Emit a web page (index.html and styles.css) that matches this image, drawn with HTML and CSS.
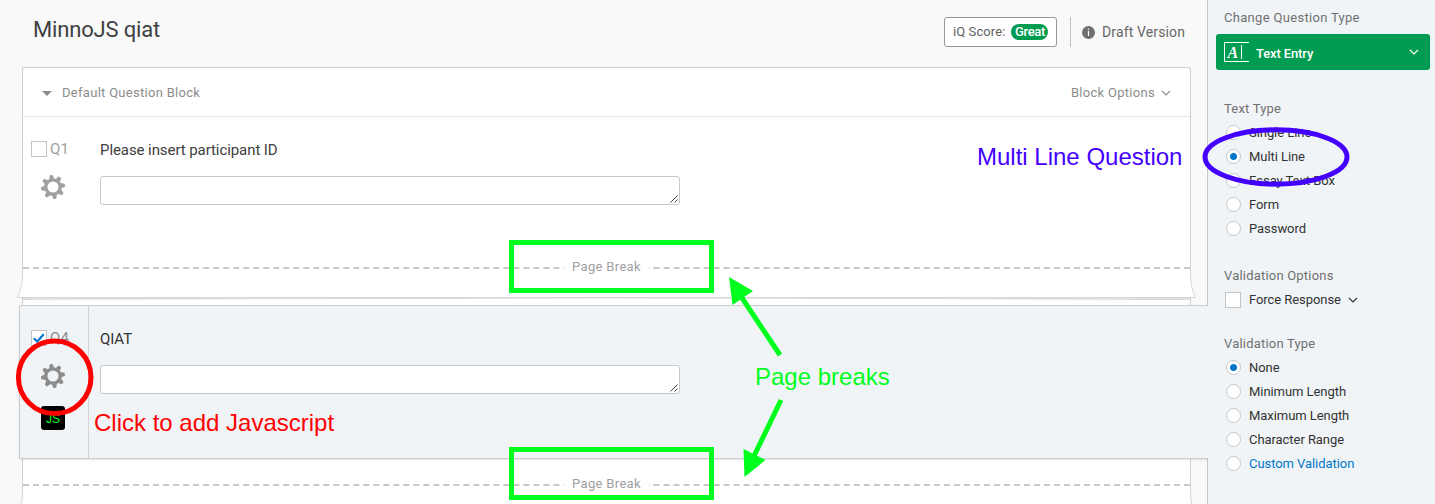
FILE: index.html
```html
<!DOCTYPE html>
<html lang="en">
<head>
<meta charset="utf-8">
<title>MinnoJS qiat</title>
<link rel="stylesheet" href="styles.css">
</head>
<body>
<svg class="defs" aria-hidden="true">
  <symbol id="gear" viewBox="-12 -12 24 24">
    <circle r="7.200" fill="none" stroke="currentColor" stroke-width="3.300"/>
    <g fill="currentColor" transform="rotate(-9)">
      <path id="tooth" d="M-2.500-8L-1.700-11.400Q-1.500-12 -.8-12H.8Q1.500-12 1.700-11.400L2.500-8Z"/>
      <use href="#tooth" transform="rotate(45)"/><use href="#tooth" transform="rotate(90)"/>
      <use href="#tooth" transform="rotate(135)"/><use href="#tooth" transform="rotate(180)"/>
      <use href="#tooth" transform="rotate(225)"/><use href="#tooth" transform="rotate(270)"/>
      <use href="#tooth" transform="rotate(315)"/>
    </g>
  </symbol>
  <symbol id="chevron" viewBox="0 0 10 6"><path d="M1 1l4 4 4-4" fill="none" stroke="currentColor" stroke-width="1.1"/></symbol>
  <symbol id="grip" viewBox="0 0 8 8"><path d="M.5 7.5l7-7M4.5 7.5l3-3" stroke="#444" stroke-width="1" fill="none"/></symbol>
  <symbol id="curl" viewBox="0 0 1181 23">
    <path d="M6.500 0C6.500 9 4 18 1.500 22.500H1179.500C1177 18 1174.500 9 1174.500 0Z" fill="#fff"/>
    <path d="M6.500 0C6.500 9 4 18 1.500 22.500H1179.500C1177 18 1174.500 9 1174.500 0" fill="none" stroke="#d6d6d6"/>
  </symbol>
</svg>

<div class="app">
  <main class="editor">
    <header class="topbar">
      <h1>MinnoJS qiat</h1>
      <div class="score">iQ Score: <span class="pill">Great</span></div>
      <div class="draft">
        <svg width="13" height="13" viewBox="0 0 13 13"><circle cx="6.500" cy="6.500" r="6.500" fill="#707070"/><path d="M6.500 5v5M6.500 2.800v1.300" stroke="#fff" stroke-width="1.200" fill="none"/></svg>
        <span>Draft Version</span>
      </div>
    </header>

    <section class="sheet first">
      <div class="block-head">
        <svg width="10" height="5" viewBox="0 0 10 5"><path d="M0 0h10L5 5z" fill="#8c8c8c"/></svg>
        <span class="block-name">Default Question Block</span>
        <span class="block-options">Block Options</span>
        <svg class="chev" width="10" height="6"><use href="#chevron"/></svg>
      </div>
      <div class="question">
        <div class="gutter">
          <div class="pick"><i class="check"></i><span>Q1</span></div>
          <svg class="gear" width="24" height="24"><use href="#gear"/></svg>
        </div>
        <div class="body">
          <p>Please insert participant ID</p>
          <div class="field"><svg width="8" height="8"><use href="#grip"/></svg></div>
        </div>
      </div>
      <div class="break"><span>Page Break</span></div>
    </section>
    <div class="curl-row"><svg width="1181" height="23"><use href="#curl"/></svg></div>

    <section class="sheet second">
      <svg class="curl-shadow" width="1167" height="7" viewBox="0 0 1167 7"><path d="M0 0H1167V2Q900 1 584 .5Q268 1 0 2Z" fill="#dedede"/></svg>
      <div class="question selected">
        <div class="gutter">
          <div class="pick"><i class="check"><svg width="14" height="14" viewBox="0 0 14 14"><path d="M1.800 7.300l3.400 3.300 6.500-7.400" fill="none" stroke="#0077c8" stroke-width="2.200"/></svg></i><span>Q4</span></div>
          <svg class="gear" width="24" height="24"><use href="#gear"/></svg>
          <div class="js">JS</div>
        </div>
        <div class="body">
          <p>QIAT</p>
          <div class="field"><svg width="8" height="8"><use href="#grip"/></svg></div>
        </div>
      </div>
      <div class="break"><span>Page Break</span></div>
    </section>
    <div class="curl-row"><svg width="1181" height="23"><use href="#curl"/></svg></div>
  </main>

  <aside class="panel">
    <h2 class="wide">Change Question Type</h2>
    <div class="type-button">
      <svg width="25" height="20" viewBox="0 0 25 20"><path d="M25 .5H.5v19H25M17.500 3v14" fill="none" stroke="#fff"/><text class="type-letter" x="3.500" y="15.500">A</text></svg>
      <span>Text Entry</span>
      <svg width="10" height="6"><use href="#chevron"/></svg>
    </div>
    <h2 class="text-type">Text Type</h2>
    <ul>
      <li><i class="radio"></i>Single Line</li>
      <li><i class="radio on"></i>Multi Line</li>
      <li><i class="radio"></i>Essay Text Box</li>
      <li><i class="radio"></i>Form</li>
      <li><i class="radio"></i>Password</li>
    </ul>
    <h2 class="options">Validation Options</h2>
    <ul>
      <li><i class="check"></i>Force Response <svg width="10" height="6"><use href="#chevron"/></svg></li>
    </ul>
    <h2 class="validation">Validation Type</h2>
    <ul>
      <li><i class="radio on"></i>None</li>
      <li><i class="radio"></i>Minimum Length</li>
      <li><i class="radio"></i>Maximum Length</li>
      <li><i class="radio"></i>Character Range</li>
      <li class="link"><i class="radio"></i>Custom Validation</li>
    </ul>
  </aside>
</div>

<svg class="notes" width="1435" height="504" viewBox="0 0 1435 504">
  <g fill="none" stroke-width="5">
    <ellipse cx="1276" cy="157" rx="71" ry="27.200" stroke="#4400ff"/>
    <circle cx="54.700" cy="377.300" r="36.300" stroke="#f00"/>
    <g stroke="#00ff1e">
      <path d="M511.500 242.500h200v48h-200zM511.500 449.500h200v48h-200z"/>
      <path d="M780 355L740 295M781 400L754 456"/>
    </g>
  </g>
  <path d="M729 277l24 14-20.500 14zM744.500 477l-1-28 22 11z" fill="#00ff1e"/>
  <text x="977" y="165" fill="#4400ff">Multi Line Question</text>
  <text x="755" y="385" fill="#00ff1e">Page breaks</text>
  <text x="94" y="431" fill="#f00">Click to add Javascript</text>
</svg>
</body>
</html>
```
FILE: styles.css
```css
* { box-sizing: border-box; }
body { margin: 0; height: 504px; overflow: hidden; position: relative; font: 400 13px/24px Roboto, sans-serif; color: #333; }
h1, h2, p, ul { margin: 0; padding: 0; }
ul { list-style: none; }
svg { display: block; flex: none; }
.defs { position: absolute; width: 0; height: 0; }
.app { display: flex; height: 504px; overflow: hidden; }

.editor { width: 1207px; flex: none; background: #f9f9f9; }
.topbar { height: 67px; display: flex; align-items: flex-start; padding: 17px 22px 0 33px; }
h1 { flex: 1; font-size: 22px; font-weight: 400; line-height: 25px; letter-spacing: -.17px; color: #404041; }
.score { display: flex; align-items: center; height: 30px; width: 113px; padding-left: 8px; border: 1px solid #979797; border-radius: 3px; background: #fff; color: #606060; white-space: nowrap; letter-spacing: .1px; }
.pill { margin-left: 6px; width: 37px; height: 16px; line-height: 16px; border-radius: 8px; background: #009c51; color: #fff; font-weight: 500; text-align: center; letter-spacing: -.35px; }
.draft { display: flex; align-items: center; gap: 7px; height: 30px; margin-left: 13px; padding-left: 11px; border-left: 1px solid #c4c4c4; color: #686868; font-size: 14px; letter-spacing: .13px; }

.sheet { margin: 0 16px 0 22px; background: #fff; border: solid #cfcfcf; border-width: 0 1px; }
.first { height: 208px; border-top-width: 1px; border-radius: 3px 3px 0 0; }
.second { height: 194px; }
.block-head { height: 49px; display: flex; align-items: center; padding: 2px 19px 0 19px; border-bottom: 1px solid #e6e6e6; color: #8c8c8c; letter-spacing: .29px; }
.block-name { flex: 1; margin-left: 10px; }
.chev { margin-left: 6px; }

.question { display: flex; height: 150px; }
.gutter { width: 66px; padding: 24px 0 0 8px; border-right: 1px solid transparent; color: #a0a0a0; }
.pick { display: flex; align-items: center; gap: 3px; height: 16px; font-size: 15px; letter-spacing: .3px; }
.check { width: 16px; height: 16px; border: 1px solid #c4c4c4; background: #fff; flex: none; }
.gear { margin: 18px 0 0 10px; }
.body { padding: 21px 0 0 11px; }
.body p { font-size: 15px; letter-spacing: -.08px; color: #404041; }
.field { margin-top: 14px; width: 580px; height: 29px; border: 1px solid #c8c8c8; border-radius: 3px; background: #fff; display: flex; align-items: flex-end; justify-content: flex-end; padding: 1px; }

.selected { position: relative; z-index: 1; width: 1189px; height: 154px; margin-left: -4px; background: #f0f4f7; border: 1px solid #c9cdd0; border-right: 0; border-radius: 2px 0 0 2px; box-shadow: 0 1px 2px rgba(0, 0, 0, .1); clip-path: inset(0 0 -3px -3px); }
.selected .gutter { width: 69px; padding-left: 11px; border-right-color: #d2d4d6; color: #8c8c8c; }
.js { width: 24px; height: 24px; margin: 18px 0 0 10px; border-radius: 3px; background: #000; color: #00ff1e; font: 12px/26px "Liberation Sans", Arial, sans-serif; text-align: center; }
.selected p { color: #333; }

.break { position: relative; height: 8px; border-top: 2px dashed #c8c8c8; }
.second .break { margin-top: 25px; }
.break span { position: absolute; left: 541px; top: -14px; width: 85px; background: #fff; text-align: center; color: #a0a0a0; letter-spacing: .33px; }
.curl-row { height: 23px; margin-left: 16px; }

.panel { flex: 1; padding: 6px 5px 0 8px; border-left: 1px solid #c4c8cb; background: #f0f4f7; letter-spacing: -.06px; }
h2 { padding-left: 8px; font-size: 13px; font-weight: 400; line-height: 24px; letter-spacing: .2px; color: #707070; }
.wide { letter-spacing: .31px; }
.type-button { display: flex; align-items: center; height: 36px; margin-top: 4px; padding: 0 11px 0 8px; border-radius: 3px; background: #009c51; color: #fff; }
.type-button span { flex: 1; margin-left: 7px; padding-top: 3px; font-weight: 500; letter-spacing: -.12px; }
.type-letter { font: italic bold 16px "Liberation Serif", serif; fill: #fff; }
.text-type { margin-top: 27px; }
.options { margin-top: 23px; }
.validation { margin-top: 20px; }
li { display: flex; align-items: center; height: 24px; padding-left: 9.5px; }
.radio { width: 15px; height: 15px; margin: 0 8.5px 1px 0; border: 1px solid #c4c8cb; border-radius: 50%; background: #fff; }
.on { background: radial-gradient(circle, #0077c8 3px, #fff 4px); }
li .check { margin: 0 8.5px 1px -1px; }
li svg { margin-left: 7px; }
.link { color: #0077c8; }

.notes { position: absolute; left: 0; top: 0; z-index: 2; font: 24px "Liberation Sans", Arial, sans-serif; }
```
